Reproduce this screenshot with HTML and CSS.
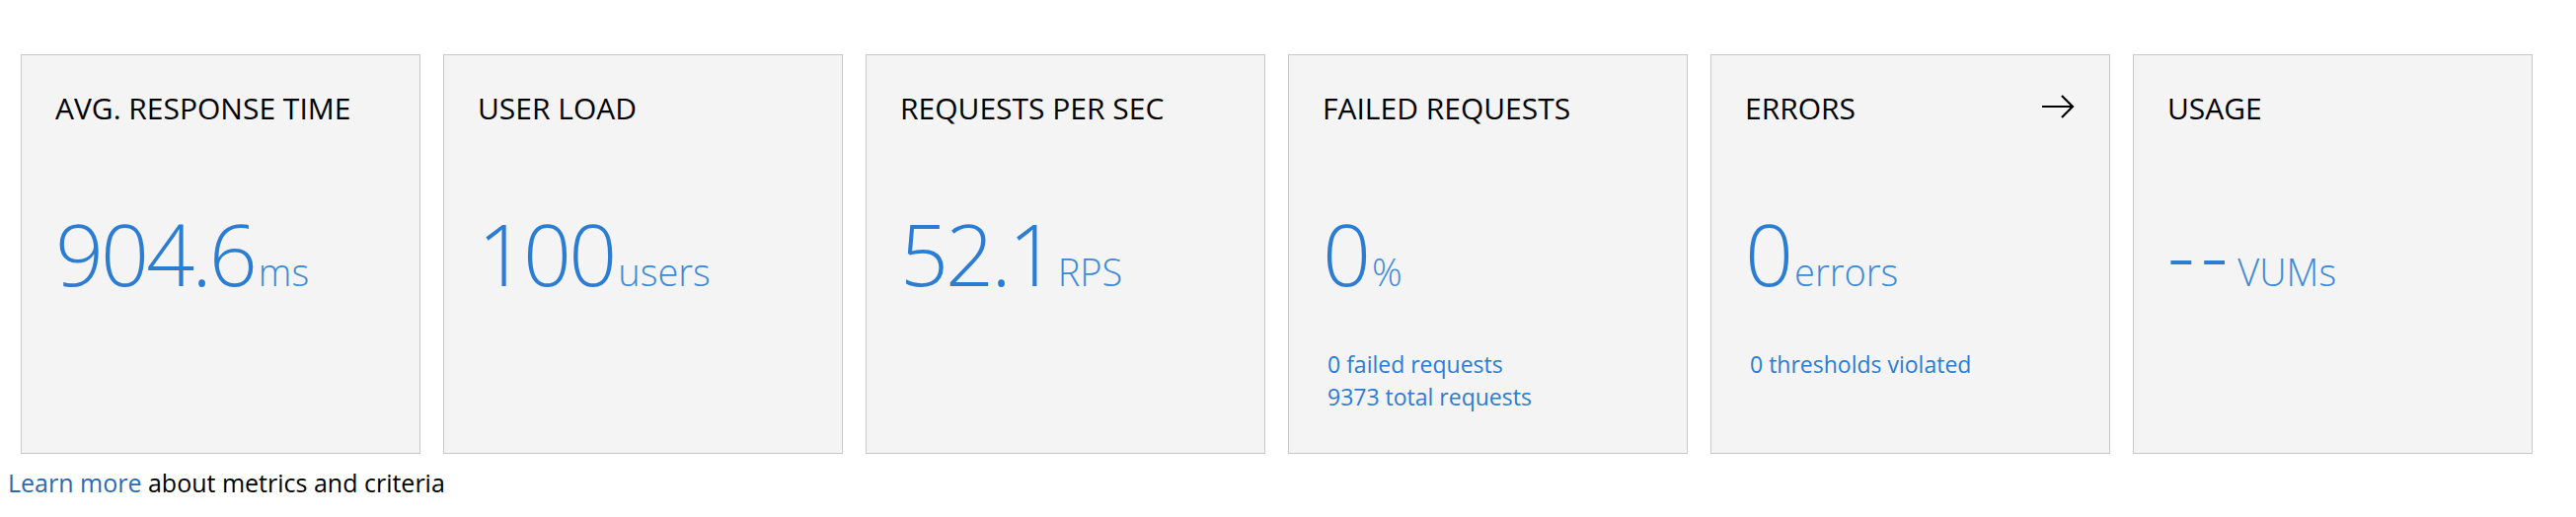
FILE: index.html
```html
<!DOCTYPE html>
<html>
<head>
<meta charset="utf-8">
<link rel="stylesheet" href="styles.css">
</head>
<body>
<div class="cards">
  <div class="card">
    <div class="card-head"><span class="title">AVG. RESPONSE TIME</span></div>
    <div class="value"><span class="num">904.6</span><span class="unit">ms</span></div>
  </div>
  <div class="card">
    <div class="card-head"><span class="title">USER LOAD</span></div>
    <div class="value"><span class="num">100</span><span class="unit">users</span></div>
  </div>
  <div class="card">
    <div class="card-head"><span class="title">REQUESTS PER SEC</span></div>
    <div class="value"><span class="num">52.1</span><span class="unit">RPS</span></div>
  </div>
  <div class="card">
    <div class="card-head"><span class="title">FAILED REQUESTS</span></div>
    <div class="value"><span class="num">0</span><span class="unit">%</span></div>
    <div class="sub">
      <div>0 failed requests</div>
      <div>9373 total requests</div>
    </div>
  </div>
  <div class="card">
    <div class="card-head"><span class="title">ERRORS</span>
      <svg class="arrow" width="34" height="26" viewBox="0 0 34 26"><path d="M1 13 H32 M21 2 L32 13 L21 24" fill="none" stroke="#000" stroke-width="2.2"/></svg>
    </div>
    <div class="value"><span class="num">0</span><span class="unit">errors</span></div>
    <div class="sub">
      <div>0 thresholds violated</div>
    </div>
  </div>
  <div class="card">
    <div class="card-head"><span class="title">USAGE</span></div>
    <div class="value"><span class="num dashes">--</span><span class="unit">VUMs</span></div>
  </div>
</div>
<p class="footer"><a class="link" href="#">Learn more</a> about metrics and criteria</p>
</body>
</html>
```
FILE: styles.css
```css
body {
  margin: 8px;
  font-family: "Open Sans", "Noto Sans", sans-serif;
  background: #fff;
  color: #000;
}
.cards {
  display: flex;
  gap: 23px;
  margin: 47px 0 0 13px;
}
.card {
  box-sizing: border-box;
  width: 405px;
  height: 405px;
  background: #f4f4f4;
  border: 1px solid #c8c8c8;
  padding: 34px 34px 0 34px;
  display: flex;
  flex-direction: column;
}
.card-head {
  display: flex;
  justify-content: space-between;
  align-items: center;
  height: 40px;
}
.title {
  font-size: 30px;
  line-height: 40px;
  color: #000;
}
.arrow {
  margin-right: 1px;
  margin-top: -5px;
}
.value {
  margin-top: 77px;
  height: 100px;
  display: flex;
  align-items: baseline;
  color: #2b7cd3;
  white-space: nowrap;
}
.num {
  font-size: 86px;
  line-height: 100px;
  font-weight: 300;
  letter-spacing: -3px;
}
.dashes {
  letter-spacing: 6px;
}
.unit {
  font-size: 38px;
  font-weight: 300;
  margin-left: 4px;
  color: #3d8ad8;
}
.sub {
  margin-top: 46px;
  padding-left: 5px;
  font-size: 23px;
  line-height: 33px;
  color: #2b7cd3;
}
.footer {
  margin: 11px 0 0 0;
  font-size: 25px;
  line-height: 36px;
  color: #000;
}
.link {
  color: #2e6aad;
  text-decoration: none;
}
```
